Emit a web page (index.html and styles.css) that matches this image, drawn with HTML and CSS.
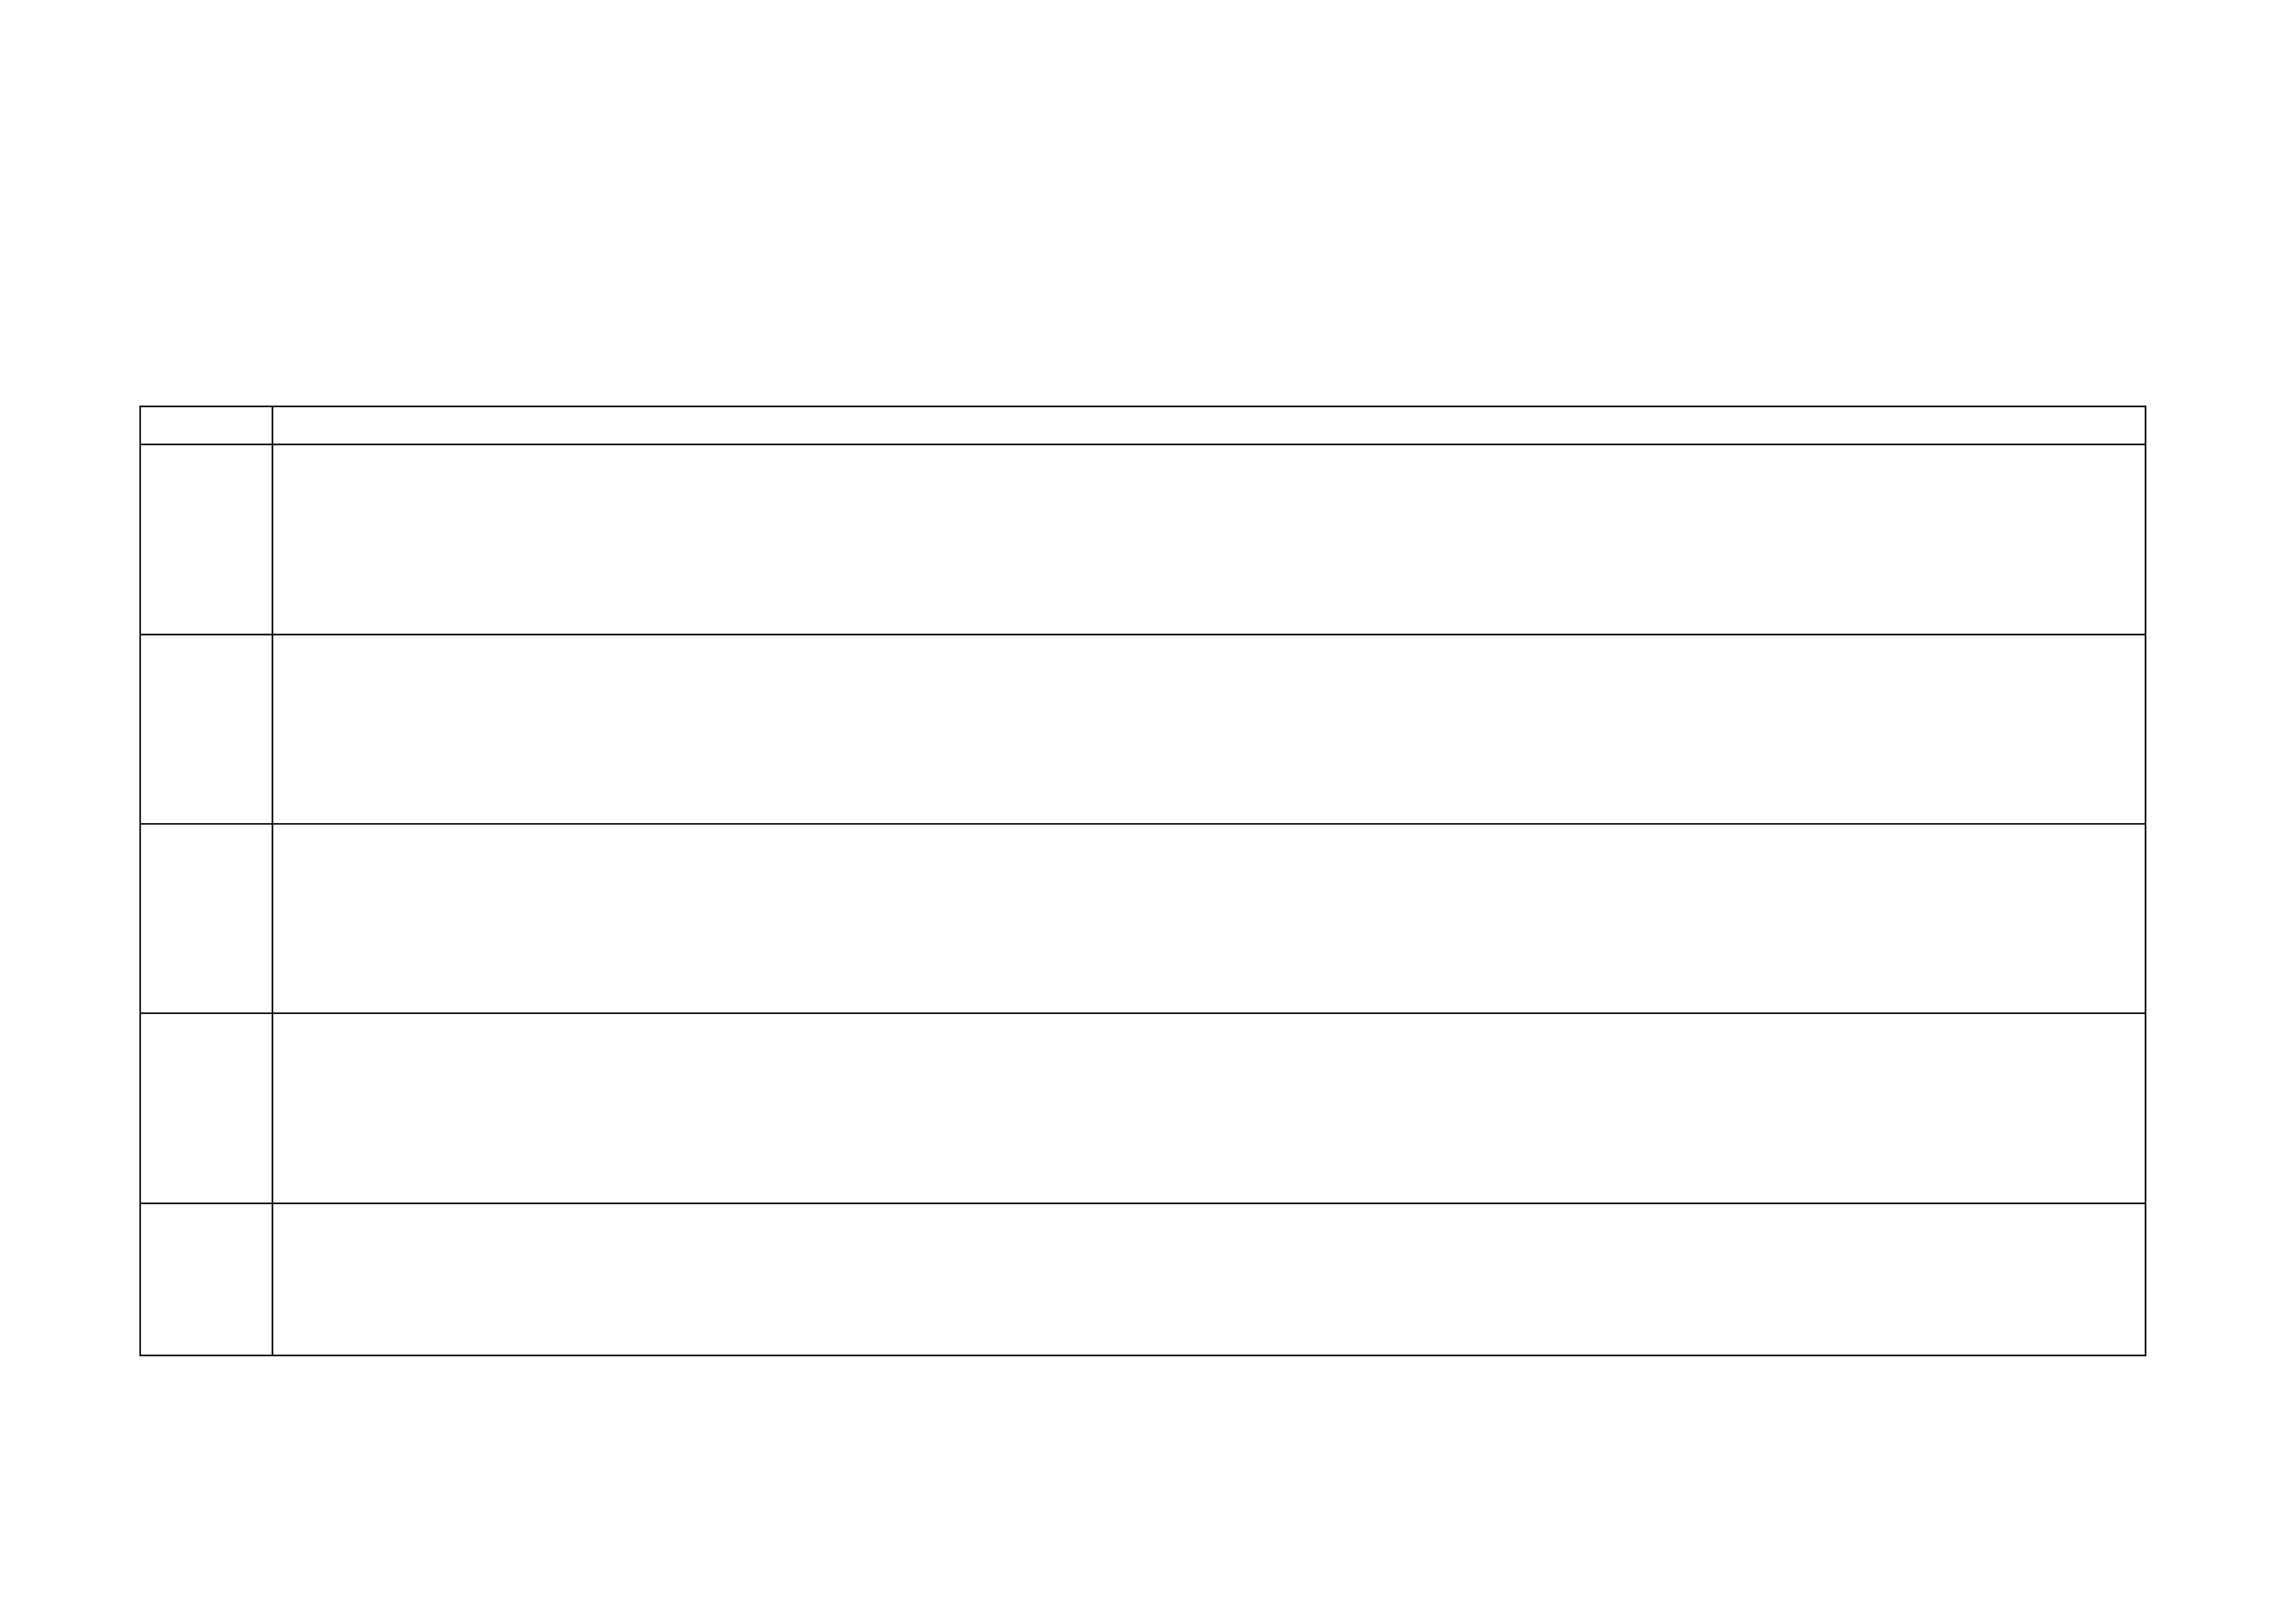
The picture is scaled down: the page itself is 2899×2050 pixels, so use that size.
FILE: index.html
```html
<!DOCTYPE html>
<html lang="en">
<head>
<meta charset="UTF-8" />
<meta name="viewport" content="width=device-width, initial-scale=1" />
<title>Table</title>
<link rel="stylesheet" href="styles.css">
</head>
<body>

<table class="grid">
  <colgroup>
    <col class="col-num">
    <col class="col-body">
  </colgroup>
  <thead>
    <tr class="row-head">
      <th></th>
      <th></th>
    </tr>
  </thead>
  <tbody>
    <tr class="row-a"><td></td><td></td></tr>
    <tr class="row-b"><td></td><td></td></tr>
    <tr class="row-b"><td></td><td></td></tr>
    <tr class="row-a"><td></td><td></td></tr>
    <tr class="row-last"><td></td><td></td></tr>
  </tbody>
</table>

</body>
</html>
```

FILE: styles.css
```css
html, body {
  margin: 0;
  padding: 0;
  background: #fff;
}
body {
  font-family: "Liberation Sans", Arial, sans-serif;
  padding: 512px 0 0 176px;
}
.grid {
  width: 2534px;
  table-layout: fixed;
  border-collapse: separate;
  border-spacing: 0;
  border-top: 2px solid #000;
  border-left: 2px solid #000;
}
.grid th, .grid td {
  padding: 0;
  box-sizing: border-box;
  border-right: 2px solid #000;
  border-bottom: 2px solid #000;
}
.col-num {
  width: 167px;
}
.row-head {
  height: 48px;
}
.row-a {
  height: 240px;
}
.row-b {
  height: 239px;
}
.row-last {
  height: 192px;
}
```
